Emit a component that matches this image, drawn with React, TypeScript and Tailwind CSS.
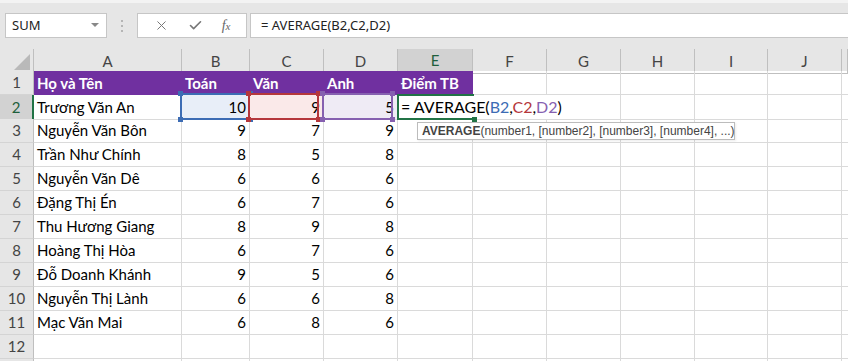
import { X, Check } from 'lucide-react';

const grid =
  'grid grid-cols-[34px_148px_68px_74px_74px_75px_74px_74px_74px_73px_74px_1fr]';

const rows: [string, number, number, number][] = [
  ['Trương Văn An', 10, 9, 5],
  ['Nguyễn Văn Bôn', 9, 7, 9],
  ['Trần Như Chính', 8, 5, 8],
  ['Nguyễn Văn Dê', 6, 6, 6],
  ['Đặng Thị Én', 6, 7, 6],
  ['Thu Hương Giang', 8, 9, 8],
  ['Hoàng Thị Hòa', 6, 7, 6],
  ['Đỗ Doanh Khánh', 9, 5, 6],
  ['Nguyễn Thị Lành', 6, 6, 8],
  ['Mạc Văn Mai', 6, 8, 6],
];

const letters = ['A', 'B', 'C', 'D', 'E', 'F', 'G', 'H', 'I', 'J', ''];

function RowHead({ n, active }: { n?: number; active?: boolean }) {
  return (
    <div
      className={`h-full flex items-center justify-center border-b border-[#d4d4d4] text-[15px] ${
        active
          ? 'bg-[#d2d2d2] border-r-2 border-r-[#217346] text-[#1e5f3c]'
          : 'bg-[#e6e6e6] border-r border-r-[#bfbfbf] text-[#444]'
      }`}
    >
      {n}
    </div>
  );
}

function Cell({ children, className = '' }: { children?: React.ReactNode; className?: string }) {
  return (
    <div
      className={`h-full flex items-center px-[3px] border-r border-b border-[#dadada] whitespace-nowrap ${className}`}
    >
      {children}
    </div>
  );
}

function Handle({ pos, color }: { pos: string; color: string }) {
  return <div className={`absolute w-[5px] h-[5px] ${pos} ${color}`} />;
}

function RangeBox({ border, handle }: { border: string; handle: string }) {
  return (
    <div className={`absolute -left-[2px] -top-[2px] w-[71px] h-[27px] border-2 ${border}`}>
      <Handle pos="-left-[4px] -top-[4px]" color={handle} />
      <Handle pos="-right-[4px] -top-[4px]" color={handle} />
      <Handle pos="-left-[4px] -bottom-[4px]" color={handle} />
      <Handle pos="-right-[4px] -bottom-[4px]" color={handle} />
    </div>
  );
}

export default function App() {
  return (
    <div className="w-[848px] h-[361px] overflow-hidden bg-white font-['Lato','Liberation_Sans',sans-serif] text-[15px] text-black">
      {/* Formula bar */}
      <div className="h-[49px] bg-[#e6e6e6] border-t-[3px] border-t-[#f3f3f3] flex items-start pt-[10px] font-['Noto_Sans','Liberation_Sans',sans-serif] text-[13px] text-[#222]">
        <div className="ml-[5px] w-[102px] h-[25px] bg-white border border-[#c6c6c6] flex items-center justify-between pl-[6px] pr-[7px]">
          <span>SUM</span>
          <svg width="8" height="5" viewBox="0 0 8 5">
            <polygon points="0,0 8,0 4,4" fill="#888" />
          </svg>
        </div>
        <div className="w-[30px] h-[25px] flex flex-col items-center justify-center gap-[3px]">
          <div className="w-[2px] h-[2px] bg-[#b5b5b5]" />
          <div className="w-[2px] h-[2px] bg-[#b5b5b5]" />
          <div className="w-[2px] h-[2px] bg-[#b5b5b5]" />
        </div>
        <div className="w-[110px] h-[25px] bg-white border border-[#c6c6c6] flex items-center justify-around px-[6px] text-[#777]">
          <X size={15} strokeWidth={1.6} />
          <Check size={15} strokeWidth={2.6} />
          <span className="font-['Liberation_Serif',serif] italic text-[14px] text-[#666]">
            f<span className="text-[11px]">x</span>
          </span>
        </div>
        <div className="ml-[3px] flex-1 h-[25px] bg-white border border-[#c6c6c6] border-r-0 flex items-center pl-[10px]">
          = AVERAGE(B2,C2,D2)
        </div>
      </div>

      {/* Column headers */}
      <div className={`${grid} h-[22px] bg-[#e6e6e6] text-[15px] text-[#444]`}>
        <div className="h-full border-r border-b border-[#bfbfbf] flex items-end justify-end pr-[3px] pb-[3px]">
          <svg width="16" height="16" viewBox="0 0 16 16">
            <polygon points="16,0 16,16 0,16" fill="#b9b9b9" />
          </svg>
        </div>
        {letters.map((l, i) =>
          l === 'E' ? (
            <div
              key={i}
              className="h-full flex items-center justify-center bg-[#d2d2d2] border-r border-r-[#bfbfbf] border-b-2 border-b-[#217346] text-[#1e5f3c]"
            >
              {l}
            </div>
          ) : (
            <div
              key={i}
              className="h-full flex items-center justify-center border-r border-b border-[#bfbfbf]"
            >
              {l}
            </div>
          )
        )}
      </div>

      {/* Row 1 */}
      <div className={`${grid} h-[24px]`}>
        <RowHead n={1} />
        {['Họ và Tên', 'Toán', 'Văn', 'Anh', 'Điểm TB'].map((t) => (
          <div
            key={t}
            className="h-full flex items-center px-[3px] bg-[#7030a0] text-white font-bold whitespace-nowrap"
          >
            {t}
          </div>
        ))}
        <Cell />
        <Cell />
        <Cell />
        <Cell />
        <Cell />
        <Cell />
      </div>

      {/* Row 2 */}
      <div className={`${grid} h-[24px]`}>
        <RowHead n={2} active />
        <Cell>{rows[0][0]}</Cell>
        <Cell className="relative justify-end bg-[#e8eef8]">
          10
          <RangeBox border="border-[#3c6cb4]" handle="bg-[#3c6cb4]" />
        </Cell>
        <Cell className="relative justify-end bg-[#fae9e9]">
          9
          <RangeBox border="border-[#b5373c]" handle="bg-[#b5373c]" />
        </Cell>
        <Cell className="relative justify-end bg-[#efebf5]">
          5
          <RangeBox border="border-[#8660b0]" handle="bg-[#8660b0]" />
        </Cell>
        <div className="col-span-3 relative h-full flex items-center pl-[3px] border-r border-b border-[#dadada] whitespace-nowrap text-[16px]">
          <span>
            = AVERAGE(<span className="text-[#3c6cb4]">B2</span>,
            <span className="text-[#b5373c]">C2</span>,
            <span className="text-[#8660b0]">D2</span>)
          </span>
          <div className="absolute -left-[1px] -top-[1px] w-[77px] h-[26px] border-2 border-r-0 border-[#217346]">
            <div className="absolute -right-[3px] -bottom-[4px] w-[5px] h-[5px] bg-[#217346]" />
          </div>
          <div className="absolute left-[19px] top-[27px] z-10 w-[318px] h-[18px] pl-[4px] bg-white border border-[#bcbcbc] flex items-center text-[12px] text-[#444] font-['Liberation_Sans',sans-serif] shadow-[1px_1px_2px_rgba(0,0,0,0.08)]">
            <span className="font-bold">AVERAGE</span>(number1, [number2], [number3], [number4], ...)
          </div>
        </div>
        <Cell />
        <Cell />
        <Cell />
        <Cell />
      </div>

      {/* Rows 3-12 */}
      {rows.slice(1).map((r, i) => (
        <div key={i} className={`${grid} h-[24px]`}>
          <RowHead n={i + 3} />
          <Cell>{r[0]}</Cell>
          <Cell className="justify-end">{r[1]}</Cell>
          <Cell className="justify-end">{r[2]}</Cell>
          <Cell className="justify-end">{r[3]}</Cell>
          <Cell />
          <Cell />
          <Cell />
          <Cell />
          <Cell />
          <Cell />
          <Cell />
        </div>
      ))}
      <div className={`${grid} h-[24px]`}>
        <RowHead n={12} />
        {letters.map((_, i) => (
          <Cell key={i} />
        ))}
      </div>
      <div className={`${grid} h-[24px]`}>
        <RowHead />
        {letters.map((_, i) => (
          <Cell key={i} />
        ))}
      </div>
    </div>
  );
}
